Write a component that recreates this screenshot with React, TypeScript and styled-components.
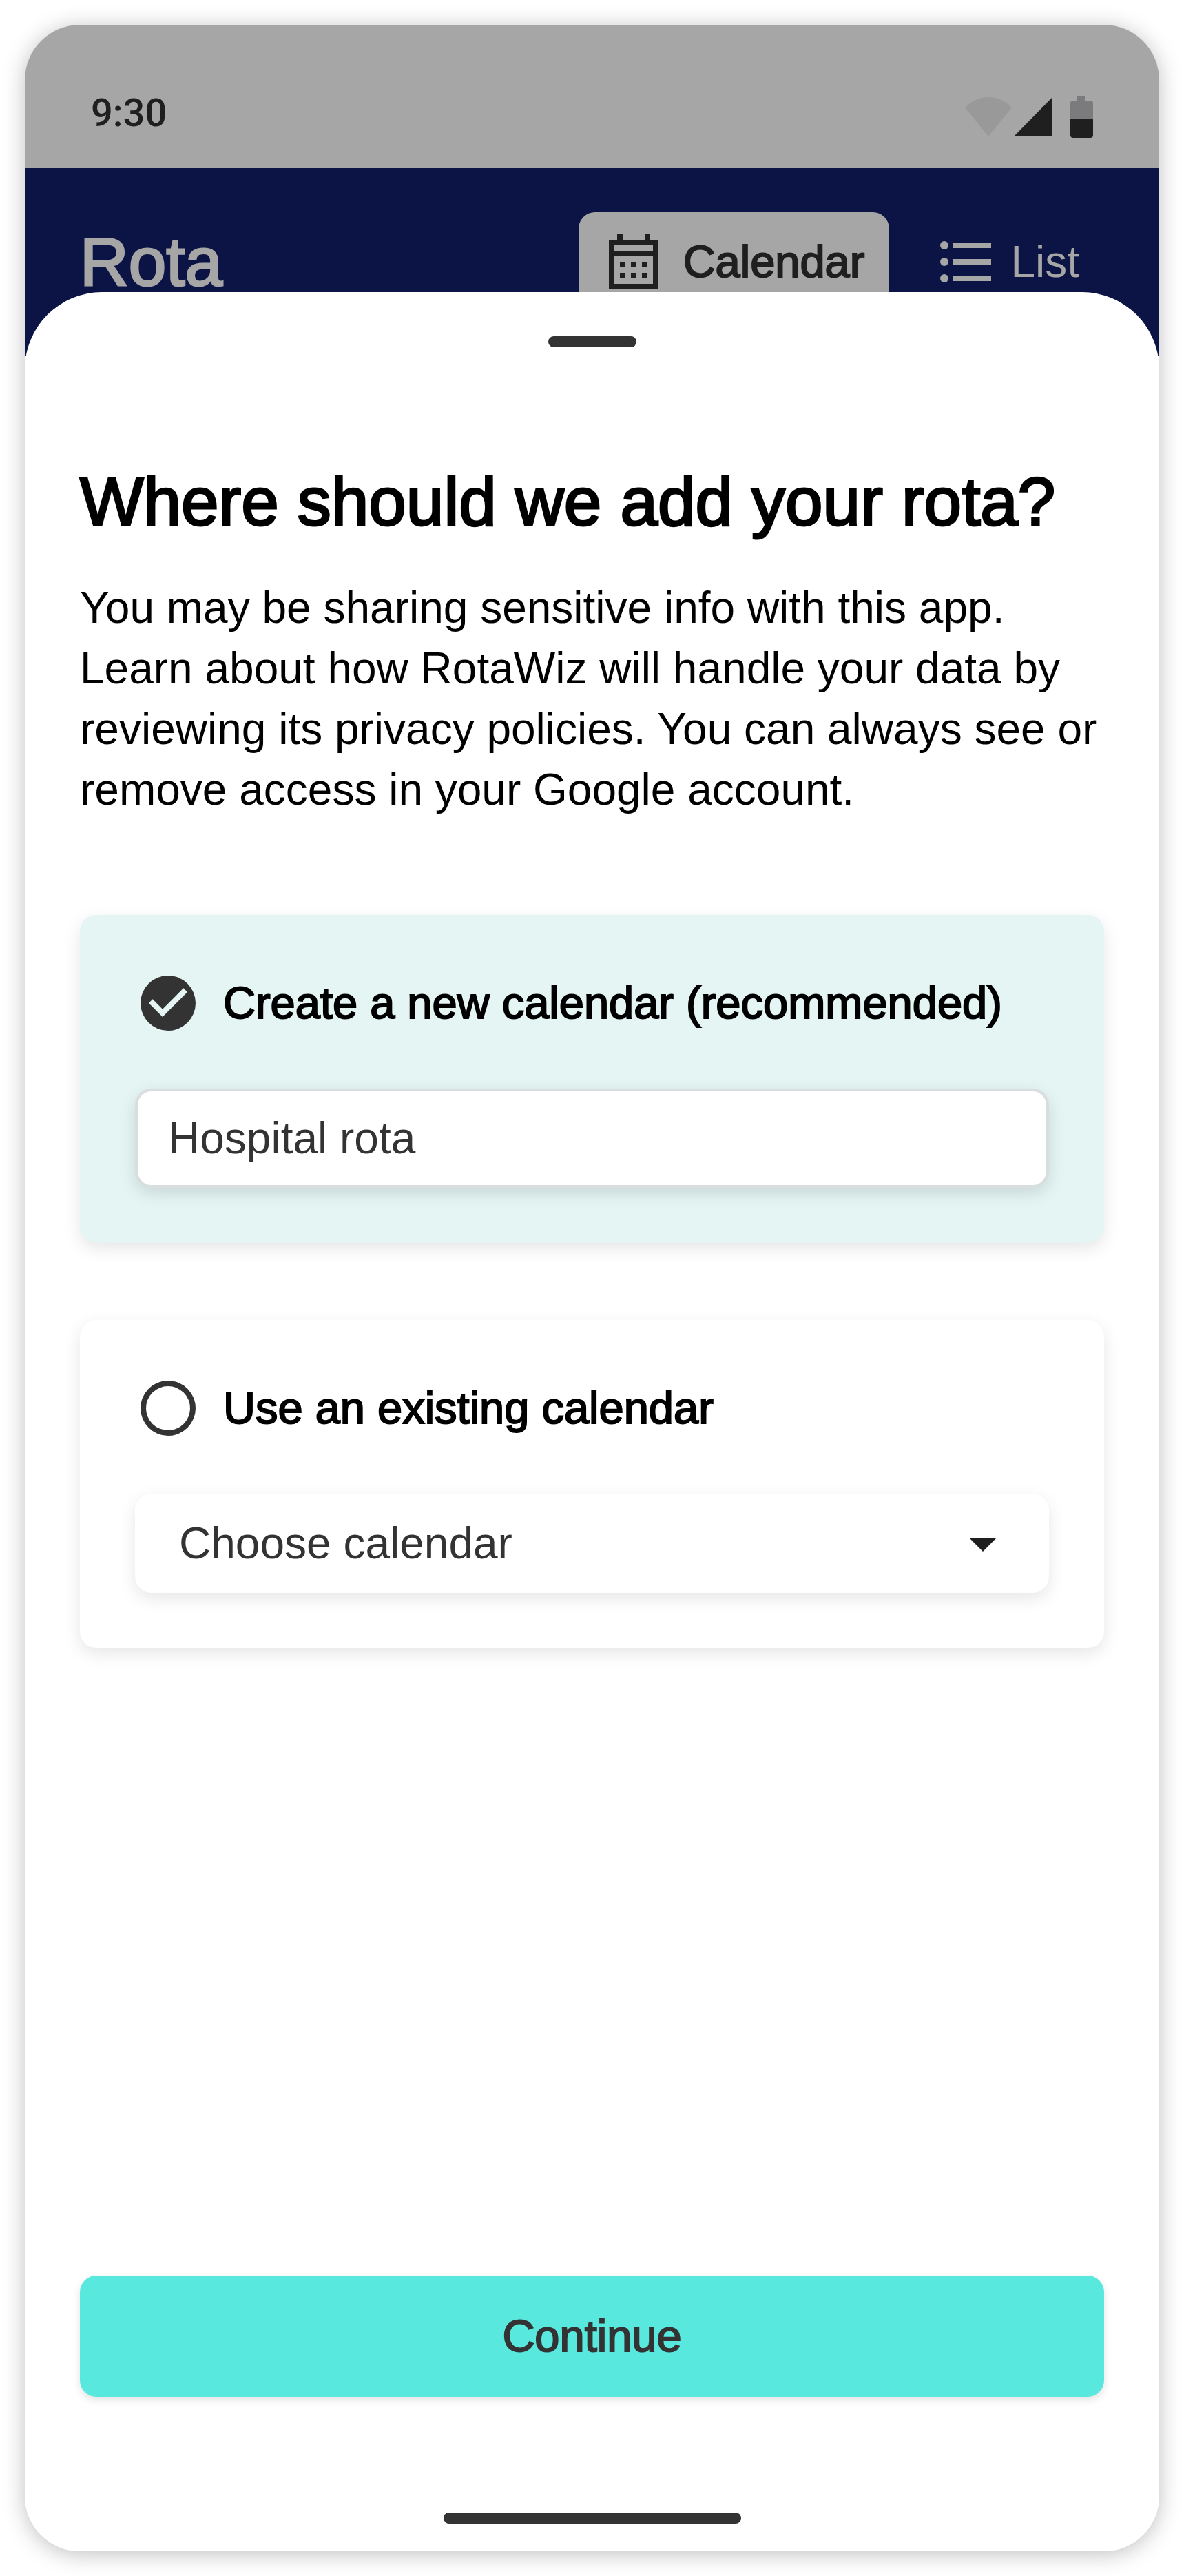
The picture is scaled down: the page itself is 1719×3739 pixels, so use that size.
import React, { useState } from 'react';
import styled, { createGlobalStyle, css } from 'styled-components';

const sans = '"Liberation Sans", Helvetica, Arial, sans-serif';

const GlobalStyle = createGlobalStyle`
  *, *::before, *::after { box-sizing: border-box; }
  body { margin: 0; background: #fff; font-family: ${sans}; }
`;

const bodyText = css`
  font-family: ${sans};
  font-size: 64px;
  font-weight: 400;
  line-height: 88px;
`;

// The families in use have no medium weight, so a thin outline thickens the regular one.
const mediumText = css`
  font-family: ${sans};
  font-size: 65px;
  font-weight: 400;
  line-height: 96px;
  -webkit-text-stroke: 2px currentColor;
`;

const titleText = css`
  margin: 0;
  font-size: 98px;
  font-weight: 400;
  line-height: 112px;
  -webkit-text-stroke: 3px currentColor;
`;

const Page = styled.div`
  display: flex;
  min-height: 100vh;
  padding: 36px;
`;

const Phone = styled.div`
  flex: 1;
  min-width: 0;
  display: flex;
  flex-direction: column;
  overflow: hidden;
  border-radius: 80px;
  background: #fff;
  box-shadow: 0 4px 32px rgba(0, 0, 0, 0.25);
`;

const StatusBar = styled.div`
  display: flex;
  align-items: flex-end;
  justify-content: space-between;
  height: 208px;
  padding: 0 96px 44px;
  background: #a6a6a6;
  color: #1f1f1f;
`;

const Clock = styled.time`
  font: 500 56px/72px Roboto, sans-serif;
`;

const StatusIcons = styled.div`
  display: flex;
  align-items: flex-end;
  svg { display: block; }
`;

const Header = styled.header`
  display: flex;
  align-items: flex-start;
  justify-content: space-between;
  height: 272px;
  padding: 64px 80px;
  background: #0c1445;
`;

const AppTitle = styled.h1`
  ${titleText}
  line-height: 144px;
  color: #a6a6a6;
`;

const Tabs = styled.nav`
  display: flex;
  gap: 32px;
`;

const Tab = styled.button<{ $active?: boolean }>`
  ${mediumText}
  display: flex;
  align-items: center;
  gap: 24px;
  height: 144px;
  padding: 0 36px 0 32px;
  border: 0;
  border-radius: 24px;
  background: ${(p) => (p.$active ? '#a6a6a6' : 'transparent')};
  color: ${(p) => (p.$active ? '#1f1f1f' : '#a6a6a6')};
  cursor: pointer;
  ${(p) =>
    !p.$active &&
    css`
      gap: 16px;
      font-size: 64px;
      -webkit-text-stroke: 0;
    `}
`;

const Icon = styled.svg`
  flex: none;
  display: block;
  width: 96px;
  height: 96px;
  fill: currentColor;
`;

const Sheet = styled.main`
  position: relative;
  flex: 1;
  display: flex;
  flex-direction: column;
  margin-top: -92px;
  padding: 64px 80px 40px;
  border-radius: 112px 112px 0 0;
  background: #fff;
`;

const Bar = styled.div<{ $width: number }>`
  flex: none;
  align-self: center;
  width: ${(p) => p.$width}px;
  height: 16px;
  border-radius: 8px;
  background: #333;
`;

const Title = styled.h2`
  ${titleText}
  margin-top: 168px;
  color: #000;
`;

const Intro = styled.p`
  ${bodyText}
  margin: 54px 0 138px;
  color: #000;
`;

const Options = styled.form`
  display: flex;
  flex-direction: column;
  gap: 112px;
`;

const Card = styled.section<{ $selected: boolean }>`
  display: flex;
  flex-direction: column;
  gap: 76px;
  padding: 80px;
  border-radius: 24px;
  background: ${(p) => (p.$selected ? '#e4f5f3' : '#fff')};
  box-shadow: 0 8px 24px rgba(0, 0, 0, 0.1);
`;

const RadioRow = styled.label`
  ${mediumText}
  display: flex;
  align-items: center;
  gap: 32px;
  color: #000;
  cursor: pointer;
`;

const Stack = styled.span`
  display: grid;
  align-items: center;
  > * { grid-area: 1 / 1; }
  svg { color: #333; pointer-events: none; }
`;

const RadioInput = styled.input`
  appearance: none;
  width: 96px;
  height: 96px;
  margin: 0;
  border-radius: 50%;
  cursor: pointer;
`;

const field = css`
  ${bodyText}
  width: 100%;
  height: 144px;
  border-radius: 24px;
  background: #fff;
  color: #333;
`;

const NameInput = styled.input`
  ${field}
  padding: 0 44px;
  border: 4px solid #d8dede;
  box-shadow: 0 8px 24px rgba(0, 0, 0, 0.12);
`;

const CalendarSelect = styled.select`
  ${field}
  appearance: none;
  padding: 0 144px 0 64px;
  border: 0;
  box-shadow: 0 8px 24px rgba(0, 0, 0, 0.1);
`;

const ArrowIcon = styled(Icon)`
  justify-self: end;
  margin-right: 48px;
  fill: #1f1f1f;
`;

const ContinueButton = styled.button`
  ${mediumText}
  flex: none;
  height: 176px;
  margin: auto 0 168px;
  border: 0;
  border-radius: 24px;
  background: #58e8dd;
  color: #333;
  box-shadow: 0 4px 12px rgba(0, 0, 0, 0.12);
  cursor: pointer;
`;

type Choice = 'new' | 'existing';

function Radio({ value, choice, onChoose, children }: {
  value: Choice;
  choice: Choice;
  onChoose: (value: Choice) => void;
  children: React.ReactNode;
}) {
  return (
    <RadioRow>
      <Stack>
        <RadioInput
          type="radio"
          name="destination"
          value={value}
          checked={choice === value}
          onChange={() => onChoose(value)}
        />
        <Icon viewBox="0 0 24 24" aria-hidden="true">
          {choice === value ? (
            <path fillRule="evenodd" d="M12 2a10 10 0 1 0 0 20 10 10 0 0 0 0-20zM10 17l-5-5 1.41-1.41L10 14.17l7.59-7.59L19 8l-9 9z" />
          ) : (
            <path fillRule="evenodd" d="M12 2a10 10 0 1 0 0 20 10 10 0 0 0 0-20zM12 4a8 8 0 1 1 0 16 8 8 0 0 1 0-16z" />
          )}
        </Icon>
      </Stack>
      {children}
    </RadioRow>
  );
}

export default function App() {
  const [choice, setChoice] = useState<Choice>('new');
  const [name, setName] = useState('Hospital rota');

  return (
    <>
      <GlobalStyle />
      <Page>
        <Phone>
          <StatusBar>
            <Clock>9:30</Clock>
            <StatusIcons>
              <svg width="186" height="61" viewBox="0 0 186 61" aria-hidden="true">
                <path d="M34 59L0 17Q15 2 34 2T68 17z" fill="#999" />
                <path d="M127 2v57H71z" fill="#1f1f1f" />
                <path d="M162 0h12v7h8a4 4 0 0 1 4 4v22h-33V11a4 4 0 0 1 4-4h5z" fill="#7b7b7e" />
                <path d="M153 33h33v24a4 4 0 0 1-4 4h-25a4 4 0 0 1-4-4z" fill="#1f1f1f" />
              </svg>
            </StatusIcons>
          </StatusBar>

          <Header>
            <AppTitle>Rota</AppTitle>
            <Tabs aria-label="View">
              <Tab type="button" $active>
                <Icon viewBox="0 0 24 24" aria-hidden="true">
                  <path fillRule="evenodd" d="M3 4h3V2h2v2h8V2h2v2h3v18H3zM5 6v2h14V6zM5 10v10h14V10z" />
                  <path d="M7 12h2v2H7zM11 12h2v2h-2zM15 12h2v2h-2zM7 16h2v2H7zM11 16h2v2h-2zM15 16h2v2h-2z" />
                </Icon>
                Calendar
              </Tab>
              <Tab type="button">
                <Icon viewBox="0 0 24 24" aria-hidden="true">
                  <circle cx="4" cy="6" r="1.5" />
                  <circle cx="4" cy="12" r="1.5" />
                  <circle cx="4" cy="18" r="1.5" />
                  <path d="M7 5h14v2H7zM7 11h14v2H7zM7 17h14v2H7z" />
                </Icon>
                List
              </Tab>
            </Tabs>
          </Header>

          <Sheet>
            <Bar $width={128} />
            <Title>Where should we add your rota?</Title>
            <Intro>
              You may be sharing sensitive info with this app. Learn about how RotaWiz will handle
              your data by reviewing its privacy policies. You can always see or remove access in
              your Google account.
            </Intro>

            <Options id="destination-form" onSubmit={(e) => e.preventDefault()}>
              <Card $selected={choice === 'new'}>
                <Radio value="new" choice={choice} onChoose={setChoice}>
                  Create a new calendar (recommended)
                </Radio>
                <NameInput
                  type="text"
                  aria-label="Calendar name"
                  value={name}
                  onChange={(e) => setName(e.target.value)}
                />
              </Card>
              <Card $selected={choice === 'existing'}>
                <Radio value="existing" choice={choice} onChoose={setChoice}>
                  Use an existing calendar
                </Radio>
                <Stack>
                  <CalendarSelect aria-label="Existing calendar" defaultValue="">
                    <option value="">Choose calendar</option>
                  </CalendarSelect>
                  <ArrowIcon viewBox="0 0 24 24" aria-hidden="true">
                    <path d="M7 10l5 5 5-5z" />
                  </ArrowIcon>
                </Stack>
              </Card>
            </Options>

            <ContinueButton type="submit" form="destination-form">Continue</ContinueButton>
            <Bar $width={432} />
          </Sheet>
        </Phone>
      </Page>
    </>
  );
}
